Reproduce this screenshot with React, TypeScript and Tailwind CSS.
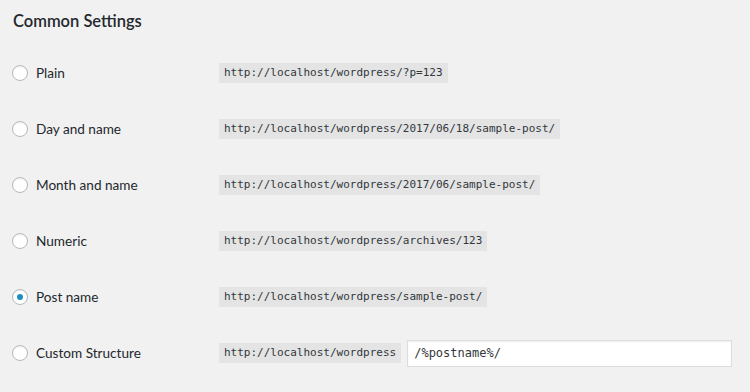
import React from "react"

type Option = {
  label: string
  url: string
  checked?: boolean
  custom?: boolean
}

const options: Option[] = [
  { label: "Plain", url: "http://localhost/wordpress/?p=123" },
  { label: "Day and name", url: "http://localhost/wordpress/2017/06/18/sample-post/" },
  { label: "Month and name", url: "http://localhost/wordpress/2017/06/sample-post/" },
  { label: "Numeric", url: "http://localhost/wordpress/archives/123" },
  { label: "Post name", url: "http://localhost/wordpress/sample-post/", checked: true },
  { label: "Custom Structure", url: "http://localhost/wordpress", custom: true },
]

function Radio({ checked }: { checked?: boolean }) {
  return (
    <span className="w-4 h-4 rounded-full border border-[#b4b9be] bg-white shadow-[inset_0_1px_2px_rgba(0,0,0,0.07)] flex items-center justify-center shrink-0">
      {checked && <span className="w-[6px] h-[6px] rounded-full bg-[#1e8cbe]" />}
    </span>
  )
}

export default function App() {
  return (
    <div className="w-[750px] h-[392px] bg-[#f1f1f1] text-[#23282d] font-['Lato',sans-serif] overflow-hidden">
      {/* heading */}
      <div className="h-[45px] px-[13px] pt-[10px]">
        <h2 className="text-[16.5px] font-semibold leading-[22px]">Common Settings</h2>
      </div>

      {/* permalink options */}
      <div className="flex flex-col">
        {options.map((opt, idx) => (
          <div key={`permalink_${idx}`} className="h-[56px] flex items-center pl-[12px]">
            <div className="w-[207px] flex items-center gap-2">
              <Radio checked={opt.checked} />
              <span className="text-[13.6px] leading-5">{opt.label}</span>
            </div>
            <code className="bg-[#e4e4e4] px-[5px] h-5 leading-5 text-[11px] font-['DejaVu_Sans_Mono',monospace] text-[#32373c]">
              {opt.url}
            </code>
            {opt.custom && (
              <input
                readOnly
                value="/%postname%/"
                className="ml-[6px] w-[325px] h-[27px] bg-white border border-[#ddd] shadow-[inset_0_1px_2px_rgba(0,0,0,0.07)] px-[6px] text-[12px] font-['DejaVu_Sans_Mono',monospace] text-[#32373c] outline-none"
              />
            )}
          </div>
        ))}
      </div>
    </div>
  )
}
